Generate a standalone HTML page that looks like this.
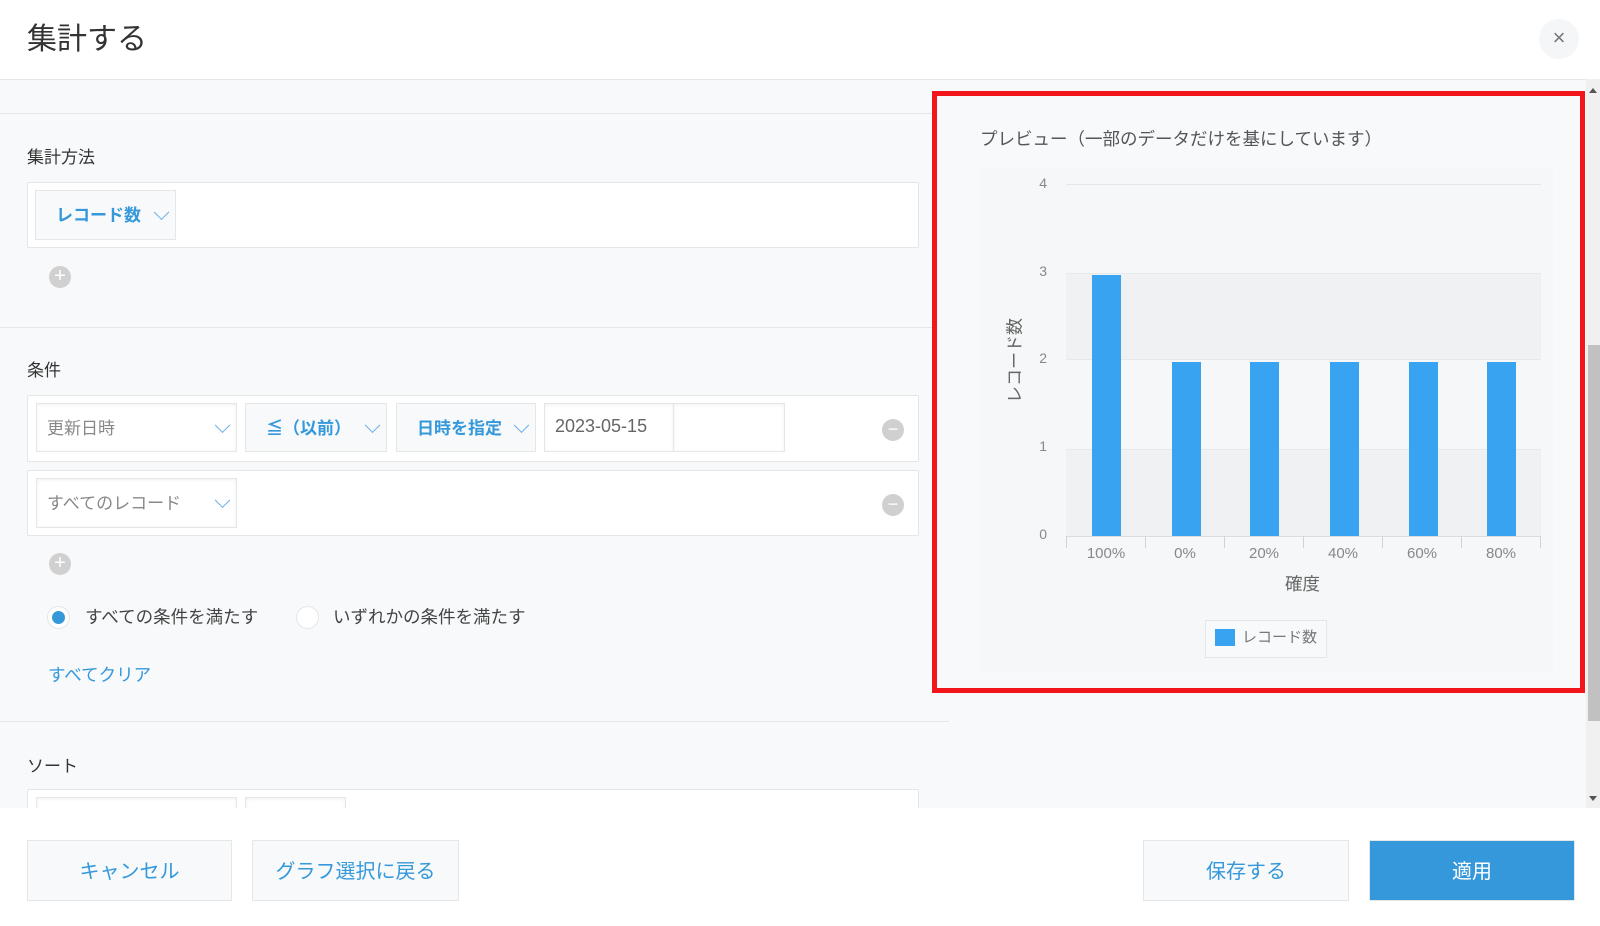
<!DOCTYPE html>
<html><head><meta charset="utf-8"><style>
*{box-sizing:border-box;margin:0;padding:0}
body{width:1600px;height:926px;overflow:hidden;background:#fff;font-family:"Liberation Sans","Noto Sans CJK JP",sans-serif;position:relative;color:#333}
.a{position:absolute}
.sel{position:absolute;border:1px solid #e3e7e8;background:#fff;box-shadow:inset 0 1px 3px rgba(0,0,0,.06);font-size:17px;color:#888;display:flex;align-items:center;padding-left:10px}
.sel.b{background:#f7f9fa;color:#3498db;font-weight:bold;box-shadow:none}
.chev{position:absolute;right:8px;top:50%;width:11px;height:11px;border-right:1.5px solid #6aaee6;border-bottom:1.5px solid #6aaee6;transform:translateY(-75%) rotate(45deg)}
.box{position:absolute;background:#fff;border:1px solid #e3e7e8;border-radius:2px}
.circ{position:absolute;width:22px;height:22px;border-radius:50%;background:#d0d0d0;color:#fff;font-size:20px;line-height:21px;text-align:center}
.lbl{position:absolute;font-size:17px;color:#333}
.btn{position:absolute;border:1px solid #e3e7e8;background:#f7f9fa;color:#3498db;font-size:20px;display:flex;align-items:center;justify-content:center;padding-bottom:2px}
.yl{position:absolute;font-size:14px;color:#888;width:20px;text-align:right}
.xl{position:absolute;font-size:15px;color:#888;width:60px;text-align:center}
.bar{position:absolute;width:29px;background:#37a3f1}
</style></head><body>
<div class="a" style="left:27px;top:14px;font-size:30px;color:#333">集計する</div>
<div class="a" style="left:1539px;top:19px;width:40px;height:40px;border-radius:50%;background:#f5f6f7;color:#777;font-size:22px;text-align:center;line-height:38px">×</div>
<div class="a" style="left:0;top:79px;width:1586px;height:729px;background:#f7f9fa;border-top:1px solid #e3e7e8"></div>
<div class="a" style="left:0;top:113px;width:949px;height:1px;background:#e3e7e8"></div>
<div class="a" style="left:0;top:327px;width:949px;height:1px;background:#e3e7e8"></div>
<div class="a" style="left:0;top:721px;width:949px;height:1px;background:#e3e7e8"></div>
<div class="a" style="left:1586px;top:79px;width:14px;height:729px;background:#f0f0f0"></div>
<div class="a" style="left:1588px;top:345px;width:12px;height:376px;background:#c1c1c1"></div>
<div class="a" style="left:1589px;top:88px;border-left:4px solid transparent;border-right:4px solid transparent;border-bottom:5px solid #555"></div>
<div class="a" style="left:1589px;top:796px;border-left:4px solid transparent;border-right:4px solid transparent;border-top:5px solid #555"></div>

<div class="lbl" style="left:27px;top:143px">集計方法</div>
<div class="box" style="left:27px;top:182px;width:892px;height:66px"></div>
<div class="sel b" style="left:35px;top:190px;width:141px;height:50px;padding-left:20px;padding-bottom:3px">レコード数<span class="chev"></span></div>
<div class="circ" style="left:49px;top:266px">+</div>

<div class="lbl" style="left:27px;top:356px">条件</div>
<div class="box" style="left:27px;top:395px;width:892px;height:67px"></div>
<div class="sel" style="left:36px;top:403px;width:201px;height:49px;padding-bottom:3px">更新日時<span class="chev"></span></div>
<div class="sel b" style="left:245px;top:403px;width:142px;height:49px;padding-left:20px;padding-bottom:3px">≦（以前）<span class="chev"></span></div>
<div class="sel b" style="left:396px;top:403px;width:140px;height:49px;padding-left:20px;padding-bottom:3px">日時を指定<span class="chev"></span></div>
<div class="sel" style="left:544px;top:403px;width:130px;height:49px;color:#666;font-size:18px;padding-bottom:3px">2023-05-15</div>
<div class="sel" style="left:673px;top:403px;width:112px;height:49px"></div>
<div class="circ" style="left:882px;top:419px;font-size:18px">−</div>
<div class="box" style="left:27px;top:470px;width:892px;height:66px"></div>
<div class="sel" style="left:36px;top:478px;width:201px;height:50px;padding-bottom:3px">すべてのレコード<span class="chev"></span></div>
<div class="circ" style="left:882px;top:494px;font-size:18px">−</div>
<div class="circ" style="left:49px;top:553px">+</div>

<div class="a" style="left:47px;top:606px;width:23px;height:23px;border-radius:50%;background:#fff;border:1px solid #e3e7e8"></div>
<div class="a" style="left:52px;top:611px;width:13px;height:13px;border-radius:50%;background:#3498db"></div>
<div class="lbl" style="left:85px;top:604px;color:#444;font-size:17.5px">すべての条件を満たす</div>
<div class="a" style="left:296px;top:606px;width:23px;height:23px;border-radius:50%;background:#fff;border:1px solid #e3e7e8"></div>
<div class="lbl" style="left:333px;top:604px;color:#444;font-size:17.5px">いずれかの条件を満たす</div>
<div class="lbl" style="left:48px;top:662px;color:#3498db;font-size:17.5px">すべてクリア</div>

<div class="lbl" style="left:27px;top:752px">ソート</div>
<div class="box" style="left:27px;top:789px;width:892px;height:40px"></div>
<div class="sel" style="left:36px;top:797px;width:201px;height:30px"></div>
<div class="sel" style="left:245px;top:797px;width:101px;height:30px"></div>

<div class="a" style="left:0;top:808px;width:1600px;height:118px;background:#fff"></div>
<div class="btn" style="left:27px;top:840px;width:205px;height:61px">キャンセル</div>
<div class="btn" style="left:252px;top:840px;width:207px;height:61px">グラフ選択に戻る</div>
<div class="btn" style="left:1143px;top:840px;width:206px;height:61px">保存する</div>
<div class="btn" style="left:1369px;top:840px;width:206px;height:61px;background:#3498db;color:#fff;border-color:#e3e7e8">適用</div>

<div class="a" style="left:932px;top:91px;width:653px;height:602px;border:5px solid #f21519;background:#f7f9fa"></div>
<div class="a" style="left:980px;top:126px;font-size:17.5px;color:#555">プレビュー（一部のデータだけを基にしています）</div>
<div class="a" style="left:980px;top:168px;width:573px;height:505px;background:#f5f7f8"></div>
<div class="a" style="left:1066px;top:184px;width:475px;height:1px;background:#e3e7e8"></div>
<div class="a" style="left:1066px;top:273px;width:475px;height:87px;background:#f0f1f3;border-top:1px solid #e6e8ea;border-bottom:1px solid #e6e8ea"></div>
<div class="a" style="left:1066px;top:449px;width:475px;height:87px;background:#f0f1f3;border-top:1px solid #e6e8ea"></div>
<div class="a" style="left:1066px;top:536px;width:475px;height:1px;background:#d8dde0"></div>
<div class="a" style="left:1066px;top:536px;width:1px;height:12px;background:#cdd5db"></div>
<div class="a" style="left:1145px;top:536px;width:1px;height:12px;background:#cdd5db"></div>
<div class="a" style="left:1224px;top:536px;width:1px;height:12px;background:#cdd5db"></div>
<div class="a" style="left:1303px;top:536px;width:1px;height:12px;background:#cdd5db"></div>
<div class="a" style="left:1382px;top:536px;width:1px;height:12px;background:#cdd5db"></div>
<div class="a" style="left:1461px;top:536px;width:1px;height:12px;background:#cdd5db"></div>
<div class="a" style="left:1540px;top:536px;width:1px;height:12px;background:#cdd5db"></div>
<div class="yl" style="left:1027px;top:175px">4</div>
<div class="yl" style="left:1027px;top:263px">3</div>
<div class="yl" style="left:1027px;top:350px">2</div>
<div class="yl" style="left:1027px;top:438px">1</div>
<div class="yl" style="left:1027px;top:526px">0</div>
<div class="a" style="left:968px;top:348px;width:90px;text-align:center;font-size:17px;color:#666;transform:rotate(-90deg)">レコード数</div>
<div class="bar" style="left:1092px;top:275px;height:261px"></div>
<div class="bar" style="left:1172px;top:362px;height:174px"></div>
<div class="bar" style="left:1250px;top:362px;height:174px"></div>
<div class="bar" style="left:1330px;top:362px;height:174px"></div>
<div class="bar" style="left:1409px;top:362px;height:174px"></div>
<div class="bar" style="left:1487px;top:362px;height:174px"></div>
<div class="xl" style="left:1076px;top:545px">100%</div>
<div class="xl" style="left:1155px;top:545px">0%</div>
<div class="xl" style="left:1234px;top:545px">20%</div>
<div class="xl" style="left:1313px;top:545px">40%</div>
<div class="xl" style="left:1392px;top:545px">60%</div>
<div class="xl" style="left:1471px;top:545px">80%</div>
<div class="a" style="left:1285px;top:571px;font-size:17.5px;color:#666">確度</div>
<div class="a" style="left:1205px;top:620px;width:122px;height:38px;border:1px solid #e3e7e8;background:#f7f9fa"></div>
<div class="a" style="left:1215px;top:629px;width:20px;height:17px;background:#37a3f1"></div>
<div class="a" style="left:1242px;top:626px;font-size:15px;color:#777">レコード数</div>
</body></html>
